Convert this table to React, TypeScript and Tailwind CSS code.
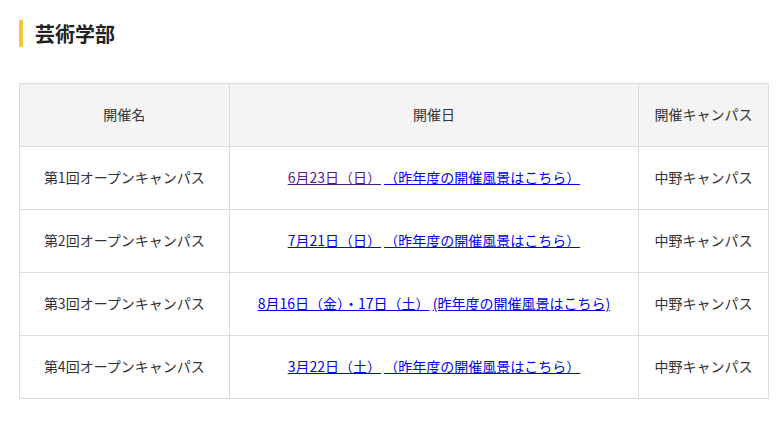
const rows = [
  { name: "第1回オープンキャンパス", date: "6月23日（日）", sep: " ", more: "（昨年度の開催風景はこちら）", visited: true },
  { name: "第2回オープンキャンパス", date: "7月21日（日）", sep: " ", more: "（昨年度の開催風景はこちら）", visited: false },
  { name: "第3回オープンキャンパス", date: "8月16日（金）・17日（土）", sep: " ", more: "(昨年度の開催風景はこちら)", visited: false },
  { name: "第4回オープンキャンパス", date: "3月22日（土）", sep: " ", more: "（昨年度の開催風景はこちら）", visited: false },
];

export default function App() {
  const font = { fontFamily: '"Noto Sans CJK JP", "Noto Sans", sans-serif' };
  const cell = "border border-[#dcdcdc] h-[63px] pb-[2px] text-center align-middle";

  return (
    <div className="bg-white w-[784px] h-[431px] px-[19px] pt-[20px] text-[#333]" style={font}>
      <h2 className="flex items-center h-[27px] border-l-4 border-[#f9c62d] pl-3 text-[20px] font-bold text-[#222] leading-none">
        芸術学部
      </h2>
      <table className="mt-[36px] w-[750px] border-collapse text-[14px]">
        <colgroup>
          <col className="w-[210px]" />
          <col className="w-[410px]" />
          <col className="w-[130px]" />
        </colgroup>
        <thead>
          <tr className="bg-[#f4f4f4]">
            <th className={`${cell} font-normal`}>開催名</th>
            <th className={`${cell} font-normal`}>開催日</th>
            <th className={`${cell} font-normal`}>開催キャンパス</th>
          </tr>
        </thead>
        <tbody>
          {rows.map((r) => (
            <tr key={r.name}>
              <td className={cell}>{r.name}</td>
              <td className={cell}>
                <a href="#" className={`underline ${r.visited ? "text-[#551a8b]" : "text-[#0000ee]"}`}>{r.date}</a>
                {r.sep}
                <a href="#" className="underline text-[#0000ee]">{r.more}</a>
              </td>
              <td className={cell}>中野キャンパス</td>
            </tr>
          ))}
        </tbody>
      </table>
    </div>
  );
}
